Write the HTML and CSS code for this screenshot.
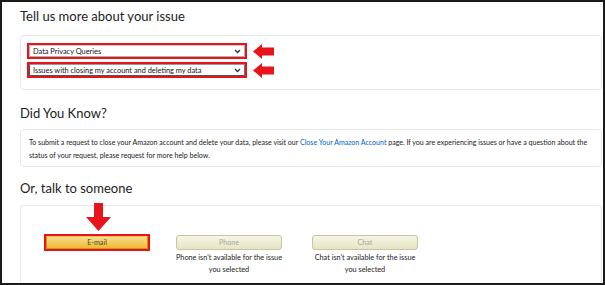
FILE: index.html
```html
<!DOCTYPE html>
<html>
<head>
<meta charset="utf-8">
<link rel="stylesheet" href="styles.css">
</head>
<body>
<div class="frame">
  <h2 class="heading h-first">Tell us more about your issue</h2>
  <div class="box box-selects">
    <div class="sel-row">
      <div class="red-outline">
        <div class="select">
          <span>Data Privacy Queries</span>
          <svg class="chev" width="7" height="5" viewBox="0 0 7 5"><path d="M1 1 L3.5 3.5 L6 1" fill="none" stroke="#333" stroke-width="1.3"/></svg>
        </div>
      </div>
      <svg class="arrow-left" width="21" height="15" viewBox="0 0 21 15"><path d="M0 7.5 L9 0 L9 3.5 L21 3.5 L21 11.5 L9 11.5 L9 15 Z" fill="#e8141c"/></svg>
    </div>
    <div class="sel-row">
      <div class="red-outline">
        <div class="select focused">
          <span>Issues with closing my account and deleting my data</span>
          <svg class="chev" width="7" height="5" viewBox="0 0 7 5"><path d="M1 1 L3.5 3.5 L6 1" fill="none" stroke="#333" stroke-width="1.3"/></svg>
        </div>
      </div>
      <svg class="arrow-left" width="21" height="15" viewBox="0 0 21 15"><path d="M0 7.5 L9 0 L9 3.5 L21 3.5 L21 11.5 L9 11.5 L9 15 Z" fill="#e8141c"/></svg>
    </div>
  </div>

  <h2 class="heading h-second">Did You Know?</h2>
  <div class="box box-info">
    <p>To submit a request to close your Amazon account and delete your data, please visit our <span class="link">Close Your Amazon Account</span> page. If you are experiencing issues or have a question about the status of your request, please request for more help below.</p>
  </div>

  <h2 class="heading h-third">Or, talk to someone</h2>
  <div class="box box-contact">
    <div class="contact">
      <svg class="arrow-down" width="25" height="28" viewBox="0 0 25 28"><path d="M8 0 L17 0 L17 14 L25 14 L12.5 28 L0 14 L8 14 Z" fill="#e8141c"/></svg>
      <div class="red-outline email-outline">
        <div class="btn btn-primary">E-mail</div>
      </div>
    </div>
    <div class="contact contact-phone">
      <div class="btn btn-disabled">Phone</div>
      <p class="note">Phone isn't available for the issue you selected</p>
    </div>
    <div class="contact contact-chat">
      <div class="btn btn-disabled">Chat</div>
      <p class="note">Chat isn't available for the issue you selected</p>
    </div>
  </div>
</div>
</body>
</html>
```

FILE: styles.css
```css
* { box-sizing: border-box; }
html, body { margin: 0; padding: 0; background: #fff; }
body {
  font-family: "Lato", "Open Sans", "Liberation Sans", sans-serif;
  color: #111;
  width: 605px;
  height: 285px;
  overflow: hidden;
}
.frame {
  width: 605px;
  height: 285px;
  border: 2px solid #1a1a1a;
  padding: 0 1px 0 18px;
  overflow: hidden;
}
.heading {
  font-family: "Lato", "Open Sans", sans-serif;
  font-weight: 400;
  font-size: 13px;
  line-height: 18px;
  color: #222;
  margin: 0;
  padding: 0;
}
.h-first { margin-top: 5px; }
.h-second { margin-top: 14px; }
.h-third { margin-top: 12px; }

.box {
  border: 1px solid #e7e7e7;
  border-radius: 4px;
}
.box-selects {
  margin-top: 10px;
  height: 55px;
  padding: 7px 6px;
  display: flex;
  flex-direction: column;
  gap: 3px;
}
.sel-row {
  display: flex;
  align-items: center;
  gap: 6px;
}
.red-outline {
  border: 2px solid #e8141c;
}
.select {
  width: 216px;
  height: 12px;
  border: 1px solid #adb1b8;
  border-top-color: #c9ccd1;
  background: #fff;
  display: flex;
  align-items: center;
  justify-content: space-between;
  padding: 0 3px;
  font-size: 7.4px;
  color: #111;
}
.select.focused {
  border: 1px solid #555;
  border-top-color: #999;
  border-right-color: #777;
}
.chev { display: block; }
.arrow-left { display: block; }

.box-info {
  margin-top: 7px;
  height: 38px;
  padding: 6px 8px 0 8px;
}
.box-info p {
  margin: 0;
  font-size: 7.05px;
  line-height: 13px;
  color: #222;
}
.link { color: #0066c0; }

.box-contact {
  margin-top: 8px;
  height: 90px;
  padding: 28px 0 0 23px;
  display: flex;
  align-items: flex-start;
  border-bottom: none;
}
.contact {
  position: relative;
  width: 106px;
  display: flex;
  flex-direction: column;
  align-items: center;
}
.contact-phone { margin-left: 26px; }
.contact-chat { margin-left: 30px; }
.arrow-down {
  position: absolute;
  left: 42px;
  top: -31px;
}
.email-outline { width: 106px; }
.btn {
  width: 106px;
  height: 15px;
  border-radius: 3px;
  font-size: 7.2px;
  line-height: 13px;
  text-align: center;
}
.email-outline .btn {
  width: 102px;
  height: 13px;
  border-radius: 0;
  line-height: 12px;
  background: linear-gradient(#f8dd8a, #f0b933);
  border: 1px solid #c89411;
  border-top-color: #e8c25b;
  color: #4b4b38;
}
.btn-disabled {
  margin-top: 1px;
  background: linear-gradient(#f6f6e4, #e5e5c4);
  border: 1px solid #c4c4a6;
  color: #a8a8a0;
}
.note {
  margin: 2px 0 0 0;
  font-size: 7.3px;
  line-height: 12px;
  text-align: center;
  color: #222;
  width: 112px;
}
```
